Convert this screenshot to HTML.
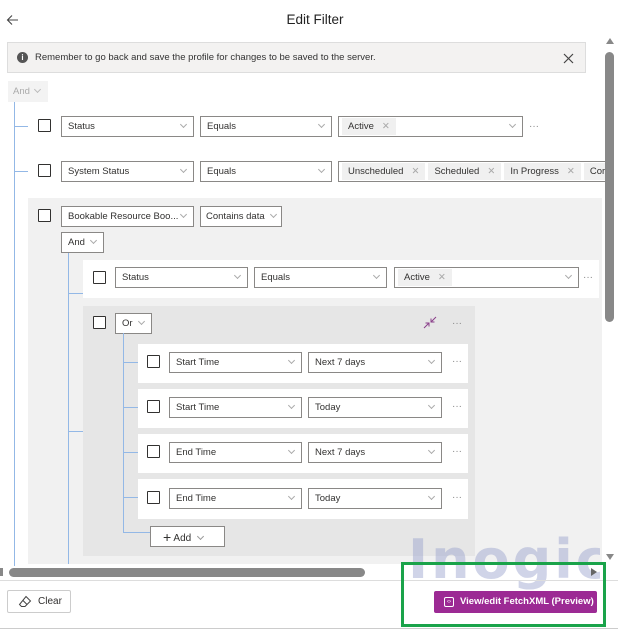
<!DOCTYPE html>
<html><head><meta charset="utf-8"><style>
*{box-sizing:border-box;margin:0;padding:0}
body{width:618px;height:630px;overflow:hidden;background:#fff;font-family:"Liberation Sans",sans-serif;font-size:10px;color:#323130;position:relative}
.a{position:absolute}
.sel{position:absolute;height:21px;border:1px solid #8a8886;background:#fff;font-size:9.5px;line-height:19px;padding-left:6px;color:#323130;white-space:nowrap;overflow:hidden}
.sel .cv{position:absolute;right:7px;top:5px;width:5px;height:5px;border-right:1px solid #aaa;border-bottom:1px solid #aaa;transform:rotate(45deg)}
.cb{position:absolute;width:13px;height:13px;border:1px solid #323130;background:#fff;border-radius:1px}
.vl{position:absolute;width:1px;background:#93b8e6}
.hl{position:absolute;height:1px;background:#93b8e6}
.dots{position:absolute;color:#888;font-size:10px;line-height:10px}
.tag{display:inline-block;background:#f0f0f0;height:17px;line-height:17px;margin-top:1px;padding:0 6px;margin-right:3px;font-size:9.5px}
.tag i{font-style:normal;color:#aaa;margin-left:8px}
.chev{display:inline-block;width:5px;height:5px;border-right:1px solid #999;border-bottom:1px solid #999;transform:rotate(45deg);margin-bottom:2px}
</style></head><body>

<svg class="a" style="left:6px;top:14px" width="14" height="12" viewBox="0 0 14 12"><path d="M12 6H2M6 1.5L1.5 6 6 10.5" fill="none" stroke="#444" stroke-width="1.1"/></svg>
<div class="a" style="left:0;width:630px;top:12px;text-align:center;font-size:13.5px;color:#222">Edit Filter</div>

<div class="a" style="left:7px;top:42px;width:579px;height:31px;background:#f3f2f1;border:1px solid #ddd"></div>
<div class="a" style="left:17px;top:52px;width:11px;height:11px;border-radius:50%;background:#555;color:#fff;font-size:8px;line-height:11px;text-align:center;font-weight:bold">i</div>
<div class="a" style="left:35px;top:52px;font-size:9.5px;color:#333">Remember to go back and save the profile for changes to be saved to the server.</div>
<svg class="a" style="left:563px;top:53px" width="11" height="11" viewBox="0 0 11 11"><path d="M1 1L10 10M10 1L1 10" stroke="#444" stroke-width="1.2"/></svg>

<div class="a" style="left:8px;top:81px;width:40px;height:21px;background:#f3f3f3;color:#aaa;font-size:9.5px;line-height:21px;padding-left:5px">And <span class="chev" style="border-color:#bbb;margin-left:2px"></span></div>
<div class="vl" style="left:14px;top:102px;height:464px"></div>
<div class="hl" style="left:14px;top:126px;width:14px"></div>
<div class="hl" style="left:14px;top:171px;width:14px"></div>

<div class="cb" style="left:38px;top:119px"></div>
<div class="sel" style="left:61px;top:116px;width:133px">Status<span class="cv"></span></div>
<div class="sel" style="left:200px;top:116px;width:132px">Equals<span class="cv"></span></div>
<div class="sel" style="left:338px;top:116px;width:185px;padding-left:3px"><span class="tag">Active<i>✕</i></span><span class="cv"></span></div>
<div class="dots" style="left:529px;top:122px">···</div>

<div class="cb" style="left:38px;top:164px"></div>
<div class="sel" style="left:61px;top:161px;width:133px">System Status<span class="cv"></span></div>
<div class="sel" style="left:200px;top:161px;width:132px">Equals<span class="cv"></span></div>
<div class="sel" style="left:338px;top:161px;width:268px;padding-left:3px;border-right:none"><span class="tag">Unscheduled<i>✕</i></span><span class="tag">Scheduled<i>✕</i></span><span class="tag">In Progress<i>✕</i></span><span class="tag">Cor</span></div>

<div class="a" style="left:28px;top:198px;width:574px;height:366px;background:#f1f1f1"></div>
<div class="cb" style="left:38px;top:209px"></div>
<div class="sel" style="left:61px;top:206px;width:133px">Bookable Resource Boo...<span class="cv"></span></div>
<div class="sel" style="left:200px;top:206px;width:82px;padding-left:5px">Contains data<span class="cv" style="right:5px"></span></div>
<div class="sel" style="left:61px;top:232px;width:43px">And<span class="cv"></span></div>
<div class="vl" style="left:68px;top:253px;height:311px"></div>
<div class="hl" style="left:68px;top:293px;width:15px"></div>
<div class="hl" style="left:68px;top:431px;width:15px"></div>

<div class="a" style="left:83px;top:260px;width:516px;height:38px;background:#fff"></div>
<div class="cb" style="left:93px;top:271px"></div>
<div class="sel" style="left:115px;top:267px;width:133px">Status<span class="cv"></span></div>
<div class="sel" style="left:254px;top:267px;width:133px">Equals<span class="cv"></span></div>
<div class="sel" style="left:394px;top:267px;width:185px;padding-left:3px"><span class="tag">Active<i>✕</i></span><span class="cv"></span></div>
<div class="dots" style="left:583px;top:273px">···</div>

<div class="a" style="left:83px;top:306px;width:392px;height:250px;background:#e6e6e6"></div>
<div class="cb" style="left:93px;top:316px"></div>
<div class="sel" style="left:115px;top:313px;width:37px">Or<span class="cv"></span></div>
<svg class="a" style="left:423px;top:316px" width="14" height="13" viewBox="0 0 14 13"><path d="M13 1L8 6M8 2.5V6H11.5M1 12L6 7M6 10.5V7H2.5" fill="none" stroke="#8a3f8a" stroke-width="1"/></svg>
<div class="dots" style="left:452px;top:319px">···</div>
<div class="vl" style="left:123px;top:333px;height:200px"></div>
<div class="hl" style="left:123px;top:532px;width:27px"></div>

<div class="a" style="left:138px;top:344px;width:330px;height:39px;background:#fff"></div>
<div class="a" style="left:138px;top:389px;width:330px;height:39px;background:#fff"></div>
<div class="a" style="left:138px;top:434px;width:330px;height:39px;background:#fff"></div>
<div class="a" style="left:138px;top:479px;width:330px;height:40px;background:#fff"></div>
<div class="hl" style="left:123px;top:362px;width:15px"></div>
<div class="hl" style="left:123px;top:407px;width:15px"></div>
<div class="hl" style="left:123px;top:452px;width:15px"></div>
<div class="hl" style="left:123px;top:497px;width:15px"></div>

<div class="cb" style="left:147px;top:355px"></div>
<div class="sel" style="left:169px;top:352px;width:133px">Start Time<span class="cv"></span></div>
<div class="sel" style="left:308px;top:352px;width:134px">Next 7 days<span class="cv"></span></div>
<div class="dots" style="left:452px;top:357px">···</div>

<div class="cb" style="left:147px;top:400px"></div>
<div class="sel" style="left:169px;top:397px;width:133px">Start Time<span class="cv"></span></div>
<div class="sel" style="left:308px;top:397px;width:134px">Today<span class="cv"></span></div>
<div class="dots" style="left:452px;top:402px">···</div>

<div class="cb" style="left:147px;top:445px"></div>
<div class="sel" style="left:169px;top:442px;width:133px">End Time<span class="cv"></span></div>
<div class="sel" style="left:308px;top:442px;width:134px">Next 7 days<span class="cv"></span></div>
<div class="dots" style="left:452px;top:447px">···</div>

<div class="cb" style="left:147px;top:491px"></div>
<div class="sel" style="left:169px;top:488px;width:133px">End Time<span class="cv"></span></div>
<div class="sel" style="left:308px;top:488px;width:134px">Today<span class="cv"></span></div>
<div class="dots" style="left:452px;top:493px">···</div>

<div class="sel" style="left:150px;top:526px;width:75px;height:21px;padding-left:12px;font-size:10px"><span style="font-size:14px;position:relative;top:1px">+</span> Add <span class="chev" style="margin-left:4px"></span></div>

<!-- watermark -->
<div class="a" style="left:408px;top:528px;width:192px;height:64px;overflow:hidden"><div style="font-size:54px;font-weight:bold;color:rgba(150,160,205,0.45);letter-spacing:3px;font-family:'DejaVu Sans',sans-serif;line-height:64px">Inogic</div></div>

<!-- scrollbars -->
<div class="a" style="left:606px;top:38px;width:0;height:0;border-left:4px solid transparent;border-right:4px solid transparent;border-bottom:6px solid #888"></div>
<div class="a" style="left:605px;top:52px;width:9px;height:270px;background:#888;border-radius:5px"></div>
<div class="a" style="left:606px;top:554px;width:0;height:0;border-left:4px solid transparent;border-right:4px solid transparent;border-top:6px solid #888"></div>
<div class="a" style="left:0;top:568px;width:3px;height:8px;background:#888"></div>
<div class="a" style="left:9px;top:568px;width:356px;height:9px;background:#888;border-radius:5px"></div>
<div class="a" style="left:591px;top:568px;width:0;height:0;border-top:4px solid transparent;border-bottom:4px solid transparent;border-left:6px solid #666"></div>

<div class="a" style="left:0;top:580px;width:618px;height:1px;background:#ddd"></div>
<div class="a" style="left:7px;top:590px;width:64px;height:23px;border:1px solid #ccc;border-radius:2px;background:#fff;font-size:10px;line-height:21px;padding-left:30px">Clear</div>
<svg class="a" style="left:18px;top:595px" width="14" height="13" viewBox="0 0 14 13"><path d="M8 1.5L12.5 6 7 11.5H3.5L1.5 9.5ZM4.5 5L9 9.5" fill="none" stroke="#444" stroke-width="1"/></svg>
<div class="a" style="left:434px;top:591px;width:163px;height:22px;background:#9c2a94;border-radius:2px;color:#fff;font-size:9.5px;font-weight:bold;line-height:22px;padding-left:26px">View/edit FetchXML (Preview)</div>
<div class="a" style="left:444px;top:597px;width:10px;height:10px;border:1px solid #fff;border-radius:2px;color:#fff;font-size:6px;line-height:8px;text-align:center">‹›</div>
<div class="a" style="left:401px;top:562px;width:205px;height:65px;border:3px solid #1aa34a"></div>
<div class="a" style="left:0;top:628px;width:618px;height:1px;background:#ccc"></div>
</body></html>
